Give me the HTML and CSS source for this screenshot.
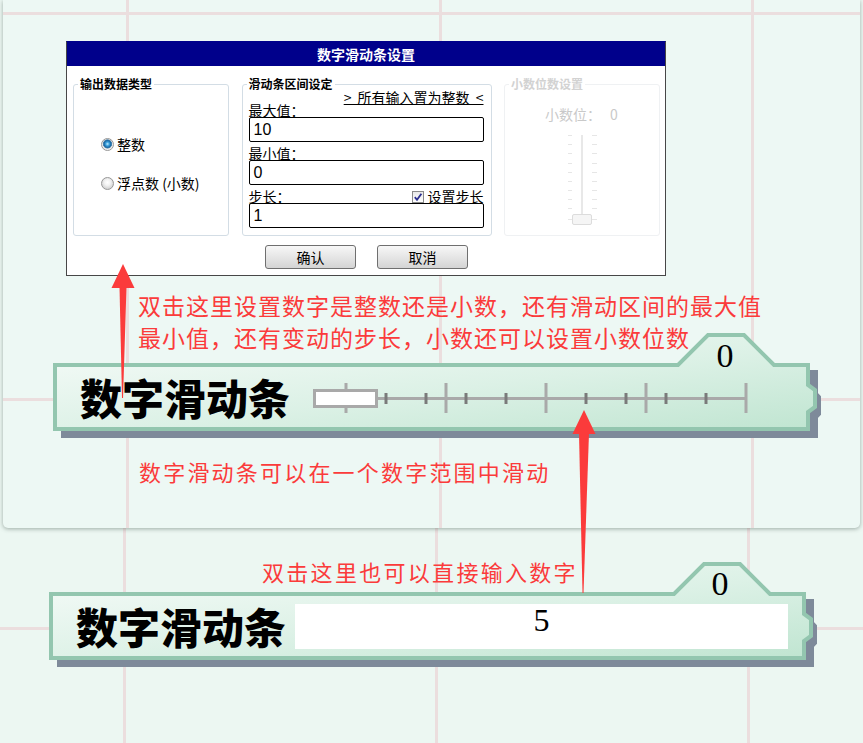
FILE: index.html
```html
<!DOCTYPE html>
<html lang="zh-CN">
<head>
<meta charset="utf-8">
<title>数字滑动条设置</title>
<link rel="stylesheet" href="styles.css">
</head>
<body>
<div class="page">
  <section class="card">
    <div class="dialog">
      <div class="titlebar">数字滑动条设置</div>
      <div class="dlg-body">
        <div class="groups">
          <fieldset class="grp grp-type">
            <legend>输出数据类型</legend>
            <div class="radios">
              <label class="radio"><span class="rb on"></span>整数</label>
              <label class="radio"><span class="rb"></span>浮点数 (小数)</label>
            </div>
          </fieldset>
          <fieldset class="grp grp-range">
            <legend>滑动条区间设定</legend>
            <div class="link-row"><span class="link">&gt; 所有输入置为整数 &lt;</span></div>
            <div class="lbl">最大值：</div>
            <div class="inp">10</div>
            <div class="lbl lbl-gap">最小值：</div>
            <div class="inp">0</div>
            <div class="lbl lbl-gap step-row">
              <span>步长：</span>
              <span class="chk-wrap"><span class="chk"><svg width="10" height="10" viewBox="0 0 10 10"><path d="M1.8 5.2 L4 7.8 L8.4 1.8" fill="none" stroke="#2b2f8f" stroke-width="1.8"/></svg></span>设置步长</span>
            </div>
            <div class="inp">1</div>
          </fieldset>
          <fieldset class="grp grp-dec">
            <legend>小数位数设置</legend>
            <div class="dec-row"><span>小数位：</span><span>0</span></div>
            <svg class="vslider" width="40" height="98" viewBox="0 0 40 98">
              <g stroke="#e6e6e6" stroke-width="1">
                <line x1="6" y1="5.5" x2="10" y2="5.5"/><line x1="30" y1="5.5" x2="35" y2="5.5"/>
                <line x1="6" y1="14.5" x2="10" y2="14.5"/><line x1="30" y1="14.5" x2="35" y2="14.5"/>
                <line x1="6" y1="23.5" x2="10" y2="23.5"/><line x1="30" y1="23.5" x2="35" y2="23.5"/>
                <line x1="6" y1="33.5" x2="10" y2="33.5"/><line x1="30" y1="33.5" x2="35" y2="33.5"/>
                <line x1="6" y1="42.5" x2="10" y2="42.5"/><line x1="30" y1="42.5" x2="35" y2="42.5"/>
                <line x1="6" y1="51.5" x2="10" y2="51.5"/><line x1="30" y1="51.5" x2="35" y2="51.5"/>
                <line x1="6" y1="60.5" x2="10" y2="60.5"/><line x1="30" y1="60.5" x2="35" y2="60.5"/>
                <line x1="6" y1="69.5" x2="10" y2="69.5"/><line x1="30" y1="69.5" x2="35" y2="69.5"/>
                <line x1="6" y1="78.5" x2="10" y2="78.5"/><line x1="30" y1="78.5" x2="35" y2="78.5"/>
                <line x1="6" y1="89.5" x2="35" y2="89.5"/>
              </g>
              <line x1="20" y1="5" x2="20" y2="92" stroke="#e8e8e8" stroke-width="2"/>
              <rect x="10.5" y="84.5" width="19" height="10" rx="1.5" fill="#f5f5f5" stroke="#dcdcdc"/>
            </svg>
          </fieldset>
        </div>
        <div class="btns">
          <button class="btn" type="button">确认</button>
          <button class="btn" type="button">取消</button>
        </div>
      </div>
    </div>

    <p class="note note-a">双击这里设置数字是整数还是小数，还有滑动区间的最大值<br>最小值，还有变动的步长，小数还可以设置小数位数</p>

    <div class="block block-1">
      <svg class="block-shape" width="775" height="108" viewBox="0 -30 775 108">
        <defs>
          <linearGradient id="bg1" x1="0" y1="0" x2="1" y2="1">
            <stop offset="0" stop-color="#f8fcfa"/>
            <stop offset="0.55" stop-color="#dcf1e6"/>
            <stop offset="1" stop-color="#c0e5d1"/>
          </linearGradient>
        </defs>
        <path transform="translate(8 7)" d="M2 2 H755 V24 L758 27 V44 L755 47 V66 H2 Z" fill="#7e8a9a" stroke="#7e8a9a" stroke-width="4"/>
        <path d="M2 2 H625 L655 -28 H691 L721 2 H755 V22 L762 27 V44 L755 49 V66 H2 Z" fill="url(#bg1)" stroke="#93c6af" stroke-width="4"/>
      </svg>
      <span class="block-name">数字滑动条</span>
      <svg class="hslider" width="440" height="32" viewBox="0 0 440 32">
        <g stroke="#a9a9a9" stroke-width="3">
          <line x1="33" y1="17.5" x2="433" y2="17.5"/>
          <line x1="33" y1="2" x2="33" y2="32"/>
          <line x1="133" y1="2" x2="133" y2="32"/>
          <line x1="233" y1="2" x2="233" y2="32"/>
          <line x1="333" y1="2" x2="333" y2="32"/>
          <line x1="433" y1="2" x2="433" y2="32"/>
        </g>
        <g stroke="#7a7a7a" stroke-width="3">
          <line x1="73" y1="12" x2="73" y2="23"/>
          <line x1="113" y1="12" x2="113" y2="23"/>
          <line x1="153" y1="12" x2="153" y2="23"/>
          <line x1="193" y1="12" x2="193" y2="23"/>
          <line x1="273" y1="12" x2="273" y2="23"/>
          <line x1="313" y1="12" x2="313" y2="23"/>
          <line x1="353" y1="12" x2="353" y2="23"/>
          <line x1="393" y1="12" x2="393" y2="23"/>
        </g>
        <rect x="1.5" y="9.5" width="62" height="16" fill="#fff" stroke="#a9a9a9" stroke-width="3"/>
      </svg>
      <span class="tab-val">0</span>
    </div>

    <p class="note note-b">数字滑动条可以在一个数字范围中滑动</p>
  </section>

  <p class="note note-c">双击这里也可以直接输入数字</p>

  <div class="block block-2">
    <svg class="block-shape" width="775" height="108" viewBox="0 -30 775 108">
      <defs>
        <linearGradient id="bg2" x1="0" y1="0" x2="1" y2="1">
          <stop offset="0" stop-color="#f8fcfa"/>
          <stop offset="0.55" stop-color="#dcf1e6"/>
          <stop offset="1" stop-color="#c0e5d1"/>
        </linearGradient>
      </defs>
      <path transform="translate(8 7)" d="M2 2 H755 V24 L758 27 V44 L755 47 V66 H2 Z" fill="#7e8a9a" stroke="#7e8a9a" stroke-width="4"/>
      <path d="M2 2 H625 L655 -28 H691 L721 2 H755 V22 L762 27 V44 L755 49 V66 H2 Z" fill="url(#bg2)" stroke="#93c6af" stroke-width="4"/>
    </svg>
    <span class="block-name">数字滑动条</span>
    <div class="num-field">5</div>
    <span class="tab-val">0</span>
  </div>

  <svg class="arrows" width="863" height="743" viewBox="0 0 863 743">
    <g fill="#fb3b3b">
      <path d="M123 264 L111.5 288 L134.5 288 Z"/>
      <path d="M119.5 287 L126.5 287 L123 398 L122 398 Z"/>
      <path d="M584 410 L572.5 434 L595.5 434 Z"/>
      <path d="M579 433 L589 433 L583.5 593 L582.5 593 Z"/>
    </g>
  </svg>
</div>
</body>
</html>
```

FILE: styles.css
```css
* { box-sizing: border-box; }
html, body { margin: 0; padding: 0; }
body {
  width: 863px;
  height: 743px;
  overflow: hidden;
  font-family: "Noto Sans CJK SC", "Liberation Sans", sans-serif;
  color: #000;
}

.page {
  position: relative;
  width: 863px;
  height: 743px;
  overflow: hidden;
  display: flow-root;
  background-color: #ecf7f2;
  background-image:
    linear-gradient(to right, transparent 123px, #ebdede 123px 126px, transparent 126px 435px, #ebdede 435px 438px, transparent 438px 747px, #ebdede 747px 750px, transparent 750px),
    linear-gradient(to bottom, transparent 627px, #ebdede 627px 630px, transparent 630px);
}

.card {
  margin-left: 3px;
  width: 857px;
  height: 528px;
  padding-top: 41px;
  display: flow-root;
  border-radius: 0 0 5px 5px;
  box-shadow: 0 1px 4px rgba(60, 80, 70, 0.45);
  background-color: #edf8f4;
  background-image:
    linear-gradient(to right, transparent 123px, #ebdede 123px 126px, transparent 126px 436px, #ebdede 436px 439px, transparent 439px 748px, #ebdede 748px 751px, transparent 751px),
    linear-gradient(to bottom, transparent 12px, #ebdede 12px 15px, transparent 15px 398px, #ebdede 398px 401px, transparent 401px);
}

/* dialog */
.dialog {
  margin-left: 63px;
  width: 600px;
  background: #fff;
  border: 1px solid #474747;
  border-top-color: #00008b;
}
.titlebar {
  height: 24px;
  background: #00008b;
  color: #fff;
  font-size: 14px;
  font-weight: 700;
  line-height: 24px;
  text-align: center;
}
.dlg-body { padding: 11px 5px 6px 6px; }
.groups {
  display: grid;
  grid-template-columns: 156px 250px 156px;
  column-gap: 12.5px;
}
.grp {
  margin: 0;
  padding: 0 7px 7px 6px;
  border: 1px solid #d3dde5;
  border-radius: 3px;
  min-width: 0;
}
.grp legend {
  padding: 0 2px;
  margin-left: -2px;
  font-size: 12px;
  font-weight: 700;
  line-height: 14px;
}

.radios {
  display: flex;
  flex-direction: column;
  gap: 23px;
  padding: 45px 0 0 21px;
}
.radio {
  display: flex;
  align-items: center;
  height: 16px;
  font-size: 14px;
  line-height: 16px;
  white-space: nowrap;
}
.rb {
  flex: none;
  width: 13px;
  height: 13px;
  margin-right: 3px;
  border: 1px solid #979797;
  border-radius: 50%;
  background: radial-gradient(circle at 50% 40%, #ffffff 0, #f2f2f2 3px, #d6d6d6 6px);
}
.rb.on {
  background: radial-gradient(circle at 50% 45%, #c4ecff 0, #3ea3de 1.8px, #1b6aa5 3.4px, #4f86b0 4.3px, #e6e6e6 4.8px, #f8f8f8 6.5px);
}

.link-row {
  height: 13px;
  font-size: 14px;
  line-height: 13px;
  text-align: right;
  white-space: nowrap;
}
.link { text-decoration: underline; word-spacing: 3px; }
.lbl {
  height: 13px;
  font-size: 14px;
  line-height: 13px;
  white-space: nowrap;
}
.lbl-gap { margin-top: 5px; }
.inp {
  height: 25px;
  border: 1px solid #000;
  border-radius: 2px;
  padding-left: 4px;
  font-family: "Liberation Sans", sans-serif;
  font-size: 16px;
  line-height: 23px;
}
.step-row {
  display: flex;
  justify-content: space-between;
  align-items: center;
}
.chk-wrap { display: flex; align-items: center; }
.chk {
  display: flex;
  align-items: center;
  justify-content: center;
  width: 12px;
  height: 12px;
  margin-right: 4px;
  border: 1px solid #8a8a8a;
  background: linear-gradient(#e8e8e8, #ffffff);
}

.grp-dec { border-color: #eff1f3; color: #c9c9c9; }
.grp-dec legend { color: #d2d2d2; }
.dec-row {
  display: flex;
  justify-content: center;
  gap: 9px;
  margin-top: 16px;
  font-size: 14px;
  line-height: 14px;
}
.vslider { display: block; margin: 9px auto 0; }

.btns {
  display: flex;
  justify-content: center;
  gap: 21px;
  margin-top: 9px;
}
.btn {
  width: 91px;
  height: 24px;
  padding: 0;
  border: 1px solid #6f6f6f;
  border-radius: 3px;
  background: linear-gradient(#f7f7f7, #e6e6e6 50%, #d4d4d4);
  color: #000;
  font-family: "Noto Sans CJK SC", sans-serif;
  font-size: 14px;
  line-height: 22px;
}

/* annotations */
.note {
  margin: 0;
  color: #fb3b3b;
  font-family: "Noto Sans CJK SC", sans-serif;
  font-size: 22px;
  line-height: 32px;
  white-space: nowrap;
}
.note-a { margin: 13px 0 0 135px; font-size: 23px; letter-spacing: 1px; }
.note-b { margin: 24px 0 0 136px; letter-spacing: 2.2px; }
.note-c { margin: 27px 0 0 262px; letter-spacing: 2.3px; }

/* blocks */
.block {
  position: relative;
  width: 757px;
  height: 68px;
  display: flex;
  align-items: center;
  padding-left: 27px;
}
.block-1 { margin: 10px 0 0 50px; }
.block-2 { margin: 5px 0 0 49px; }
.block-shape { position: absolute; left: 0; top: -30px; overflow: visible; }
.block-name, .hslider, .num-field { position: relative; }
.block-name {
  font-size: 42px;
  font-weight: 900;
  line-height: 1;
  white-space: nowrap;
}
.hslider { margin-left: 23px; flex: none; }
.num-field {
  margin-left: 9px;
  width: 493px;
  height: 45px;
  background: #fff;
  font-family: "Liberation Serif", serif;
  font-size: 32px;
  line-height: 33px;
  text-align: center;
}
.tab-val {
  position: absolute;
  left: 662px;
  top: -24px;
  width: 20px;
  text-align: center;
  font-family: "Liberation Serif", serif;
  font-size: 34px;
  line-height: 34px;
}
.block-2 .tab-val { left: 661px; top: -25px; }

.arrows {
  position: absolute;
  left: 0;
  top: 0;
  pointer-events: none;
}
```
